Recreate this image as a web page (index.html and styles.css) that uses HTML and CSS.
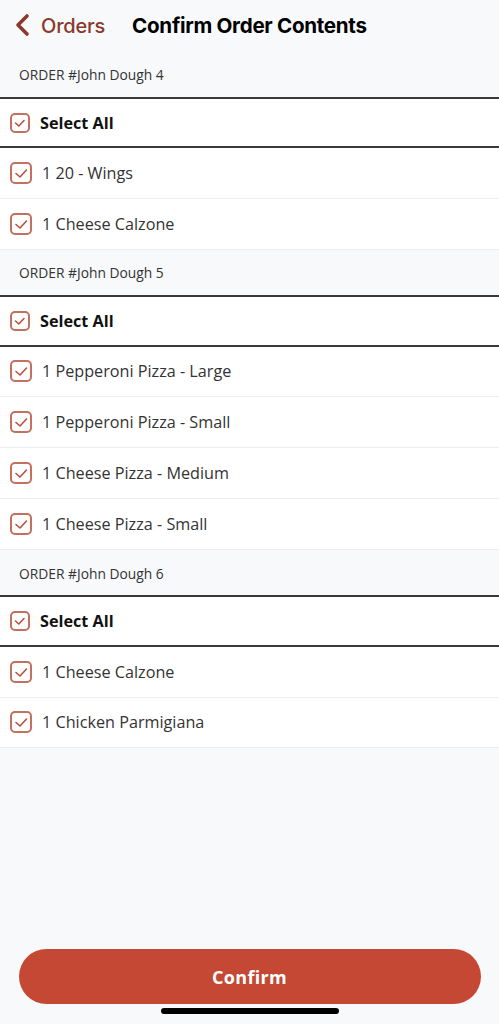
FILE: index.html
```html
<!DOCTYPE html>
<html>
<head>
<meta charset="utf-8">
<link rel="stylesheet" href="styles.css">
</head>
<body>
<div class="screen">
  <header class="nav">
    <div class="back">
      <svg class="chev" width="16" height="24" viewBox="0 0 16 24"><path d="M13 3 L4 12 L13 21" fill="none" stroke="#8a3a2c" stroke-width="3.6" stroke-linecap="round" stroke-linejoin="round"/></svg>
      <span class="back-label">Orders</span>
    </div>
    <h1 class="title">Confirm Order Contents</h1>
  </header>

  <main class="list">
    <section class="order">
      <div class="order-head first">ORDER #John Dough 4</div>
      <div class="row select-all"><span class="cb cb-sm"><svg viewBox="0 0 20 20"><path d="M5.5 10 L8.8 13 L14 7.5"/></svg></span><span class="label">Select All</span></div>
      <div class="row item"><span class="cb"><svg viewBox="0 0 22 22"><path d="M6 11.5 L10 15 L16.5 8"/></svg></span><span class="label">1 20 - Wings</span></div>
      <div class="row item"><span class="cb"><svg viewBox="0 0 22 22"><path d="M6 11.5 L10 15 L16.5 8"/></svg></span><span class="label">1 Cheese Calzone</span></div>
    </section>
    <section class="order">
      <div class="order-head">ORDER #John Dough 5</div>
      <div class="row select-all"><span class="cb cb-sm"><svg viewBox="0 0 20 20"><path d="M5.5 10 L8.8 13 L14 7.5"/></svg></span><span class="label">Select All</span></div>
      <div class="row item"><span class="cb"><svg viewBox="0 0 22 22"><path d="M6 11.5 L10 15 L16.5 8"/></svg></span><span class="label">1 Pepperoni Pizza - Large</span></div>
      <div class="row item"><span class="cb"><svg viewBox="0 0 22 22"><path d="M6 11.5 L10 15 L16.5 8"/></svg></span><span class="label">1 Pepperoni Pizza - Small</span></div>
      <div class="row item"><span class="cb"><svg viewBox="0 0 22 22"><path d="M6 11.5 L10 15 L16.5 8"/></svg></span><span class="label">1 Cheese Pizza - Medium</span></div>
      <div class="row item"><span class="cb"><svg viewBox="0 0 22 22"><path d="M6 11.5 L10 15 L16.5 8"/></svg></span><span class="label">1 Cheese Pizza - Small</span></div>
    </section>
    <section class="order">
      <div class="order-head">ORDER #John Dough 6</div>
      <div class="row select-all"><span class="cb cb-sm"><svg viewBox="0 0 20 20"><path d="M5.5 10 L8.8 13 L14 7.5"/></svg></span><span class="label">Select All</span></div>
      <div class="row item"><span class="cb"><svg viewBox="0 0 22 22"><path d="M6 11.5 L10 15 L16.5 8"/></svg></span><span class="label">1 Cheese Calzone</span></div>
      <div class="row item"><span class="cb"><svg viewBox="0 0 22 22"><path d="M6 11.5 L10 15 L16.5 8"/></svg></span><span class="label">1 Chicken Parmigiana</span></div>
    </section>
  </main>

  <footer class="footer">
    <button class="confirm">Confirm</button>
    <div class="home-bar"></div>
  </footer>
</div>
</body>
</html>
```

FILE: styles.css
```css
* { box-sizing: border-box; }
html, body { margin: 0; padding: 0; }
body {
  background: #f8f9fb;
  font-family: "Open Sans", "Noto Sans", sans-serif;
  color: #222;
}
.screen {
  width: 499px;
  height: 1024px;
  display: flex;
  flex-direction: column;
  background: #f8f9fb;
}
.nav {
  height: 50px;
  display: flex;
  align-items: center;
  padding: 1px 0 0 14px;
}
.back {
  display: flex;
  align-items: center;
  gap: 11px;
}
.chev { display: block; margin-top: -1px; }
.back-label {
  font-family: "Inter", "Liberation Sans", sans-serif;
  font-size: 20px;
  font-weight: 500;
  color: #8a3a2c;
  letter-spacing: -0.2px;
}
.title {
  margin: 0 0 0 27px;
  font-family: "Inter", "Liberation Sans", sans-serif;
  font-size: 20.6px;
  font-weight: 700;
  color: #000;
  letter-spacing: -0.3px;
}
.list { display: flex; flex-direction: column; }
.order { display: flex; flex-direction: column; }
.order-head {
  height: 47.5px;
  flex: none;
  display: flex;
  align-items: center;
  padding-left: 19px;
  padding-top: 1px;
  font-size: 13.8px;
  color: #333;
  background: #f8f9fb;
  border-bottom: 2px solid #3a3a3a;
}
.order-head.first { height: 49px; }
.row {
  display: flex;
  align-items: center;
  background: #fff;
  flex: none;
}
.select-all {
  height: 49.5px;
  padding-left: 10px;
  gap: 10px;
  border-bottom: 2px solid #3a3a3a;
}
.order:first-child .select-all { height: 49px; }
.select-all .label {
  font-size: 16.2px;
  font-weight: 700;
  color: #111;
}
.item {
  height: 50.8px;
  padding-left: 10px;
  gap: 10px;
  border-bottom: 1px solid #ebedf0;
}
.item .label {
  font-size: 16.2px;
  color: #333;
}
.cb {
  width: 22px;
  height: 22px;
  border: 2px solid #c4705f;
  border-radius: 5px;
  display: flex;
  align-items: center;
  justify-content: center;
  flex: none;
  position: relative;
}
.cb-sm { width: 20px; height: 20px; }
.cb svg { position: absolute; left: -2px; top: -2px; width: calc(100% + 4px); height: calc(100% + 4px); display: block; }
.cb path {
  fill: none;
  stroke: #b9503f;
  stroke-width: 1.6;
  stroke-linecap: round;
  stroke-linejoin: round;
}
.footer {
  margin-top: auto;
  display: flex;
  flex-direction: column;
  align-items: center;
  padding-bottom: 10px;
}
.confirm {
  width: 462px;
  height: 55px;
  border: none;
  border-radius: 28px;
  background: #c44833;
  color: #fff;
  font-family: "Open Sans", "Noto Sans", sans-serif;
  font-size: 18px;
  font-weight: 700;
  letter-spacing: 0.3px;
}
.home-bar {
  width: 178px;
  height: 6px;
  margin-top: 4px;
  border-radius: 3px;
  background: #000;
}
```
